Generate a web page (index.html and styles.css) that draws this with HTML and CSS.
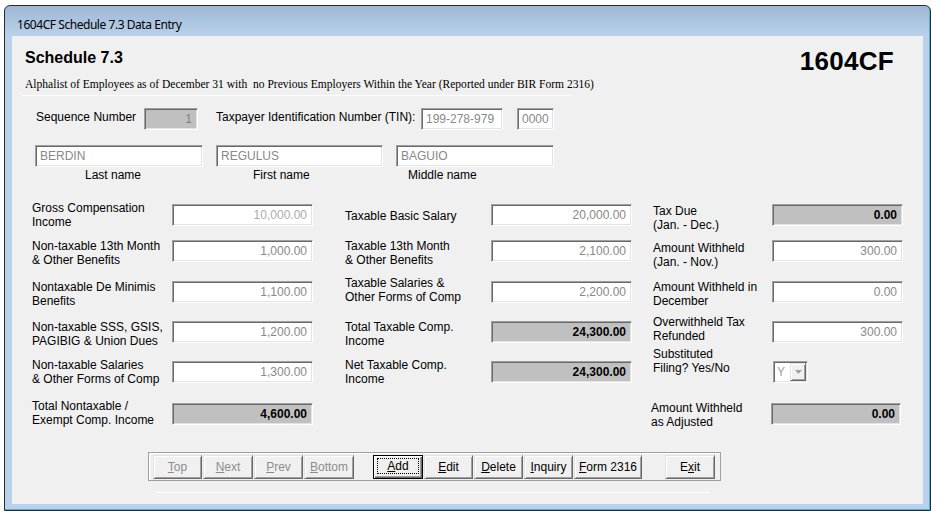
FILE: index.html
```html
<!DOCTYPE html>
<html>
<head>
<meta charset="utf-8">
<title>1604CF Schedule 7.3 Data Entry</title>
<link rel="stylesheet" href="styles.css">
</head>
<body>
<div class="window">
  <div class="titlebar">1604CF Schedule 7.3 Data Entry</div>
  <div class="client">
    <header class="head">
      <div class="head-left">
        <h1 class="sched">Schedule 7.3</h1>
        <p class="sub">Alphalist of Employees as of December 31 with&nbsp; no Previous Employers Within the Year (Reported under BIR Form 2316)</p>
      </div>
      <div class="formno">1604CF</div>
    </header>
    <div class="rule"></div>

    <div class="idrow">
      <span class="seq-lbl">Sequence Number</span>
      <div class="fld gray-plain seq">1</div>
      <span class="tin-lbl">Taxpayer Identification Number (TIN):</span>
      <div class="fld txt tin">199-278-979</div>
      <div class="fld txt tin2">0000</div>
    </div>

    <div class="names">
      <div class="fld txt">BERDIN</div>
      <div class="fld txt">REGULUS</div>
      <div class="fld txt">BAGUIO</div>
    </div>
    <div class="names namelabels">
      <span class="nl1">Last name</span>
      <span class="nl2">First name</span>
      <span class="nl3">Middle name</span>
    </div>

    <div class="cols">
      <div class="col col1">
        <span class="lbl up3">Gross Compensation<br>Income</span>
        <div class="fld num light">10,000.00</div>
        <span class="lbl up1">Non-taxable 13th Month<br>&amp; Other Benefits</span>
        <div class="fld num">1,000.00</div>
        <span class="lbl up1">Nontaxable De Minimis<br>Benefits</span>
        <div class="fld num">1,100.00</div>
        <span class="lbl up1">Non-taxable SSS, GSIS,<br>PAGIBIG &amp; Union Dues</span>
        <div class="fld num">1,200.00</div>
        <span class="lbl up3">Non-taxable Salaries<br>&amp; Other Forms of Comp</span>
        <div class="fld num">1,300.00</div>
        <span class="lbl up4">Total Nontaxable /<br>Exempt Comp. Income</span>
        <div class="fld num total">4,600.00</div>
      </div>

      <div class="col col2">
        <span class="lbl dn5">Taxable Basic Salary</span>
        <div class="fld num">20,000.00</div>
        <span class="lbl up1">Taxable 13th Month<br>&amp; Other Benefits</span>
        <div class="fld num">2,100.00</div>
        <span class="lbl up5">Taxable Salaries &amp;<br>Other Forms of Comp</span>
        <div class="fld num">2,200.00</div>
        <span class="lbl up1">Total Taxable Comp.<br>Income</span>
        <div class="fld num total">24,300.00</div>
        <span class="lbl up3">Net Taxable Comp.<br>Income</span>
        <div class="fld num total">24,300.00</div>
      </div>

      <div class="col col3">
        <span class="lbl z">Tax Due<br>(Jan. - Dec.)</span>
        <div class="fld num total">0.00</div>
        <span class="lbl dn1">Amount Withheld<br>(Jan. - Nov.)</span>
        <div class="fld num">300.00</div>
        <span class="lbl up1">Amount Withheld in<br>December</span>
        <div class="fld num">0.00</div>
        <span class="lbl up6">Overwithheld Tax<br>Refunded</span>
        <div class="fld num">300.00</div>
        <span class="lbl up14">Substituted<br>Filing? Yes/No</span>
        <div class="fld combo"><span class="combo-val">Y</span><span class="combo-btn"><svg width="7" height="4" viewBox="0 0 7 4"><path d="M0 0h7L3.5 4z" fill="#a0a0a0"/></svg></span></div>
        <span class="lbl up2 shift">Amount Withheld<br>as Adjusted</span>
        <div class="fld num total shift">0.00</div>
      </div>
    </div>

    <div class="btnbar">
      <div class="btn dis w49"><u>T</u>op</div>
      <div class="btn dis w50"><u>N</u>ext</div>
      <div class="btn dis w49"><u>P</u>rev</div>
      <div class="btn dis w50"><u>B</u>ottom</div>
      <div class="btn def w50 gap-l"><span class="focus"><u>A</u>dd</span></div>
      <div class="btn w49"><u>E</u>dit</div>
      <div class="btn w49"><u>D</u>elete</div>
      <div class="btn w49"><u>I</u>nquiry</div>
      <div class="btn w68"><u>F</u>orm 2316</div>
      <div class="btn w50 gap-r">E<u>x</u>it</div>
    </div>
    <div class="rule2"></div>
  </div>
</div>
</body>
</html>
```
FILE: styles.css
```css
html, body {
  margin: 0;
  padding: 0;
  background: #ffffff;
}

body {
  font-family: "Liberation Sans", Arial, sans-serif;
  font-size: 12px;
  color: #000;
}

.window {
  margin: 5px 0 0 4px;
  width: 927px;
  height: 506px;
  box-sizing: border-box;
  border: 1px solid #2b2b2b;
  border-radius: 6px 6px 0 0;
  background: linear-gradient(to bottom, #9db7d5 0, #b9d1ea 30px, #b9d1ea 100%);
  padding: 0 7px 6px 7px;
  display: flex;
  flex-direction: column;
  box-shadow: inset -1px -1px 0 #4fb0d3;
}

.titlebar {
  height: 21px;
  padding: 9px 0 0 5px;
  font-family: "Noto Sans", "Liberation Sans", sans-serif;
  font-size: 12px;
  letter-spacing: -0.45px;
  line-height: 20px;
  color: #000;
  white-space: nowrap;
}

.client {
  width: 911px;
  height: 468px;
  background: #f0f0f0;
  display: flex;
  flex-direction: column;
  flex: none;
}

/* header */
.head {
  display: flex;
  justify-content: space-between;
  align-items: flex-start;
  padding: 10px 29px 0 13px;
}

.sched {
  margin: 3px 0 0;
  font-size: 16px;
  line-height: 18px;
  font-weight: bold;
}

.sub {
  margin: 11px 0 0;
  font-family: "Liberation Serif", "Times New Roman", serif;
  font-size: 11.55px;
  line-height: 13px;
  white-space: nowrap;
}

.formno {
  font-size: 26px;
  line-height: 30px;
  font-weight: bold;
  letter-spacing: 0.3px;
}

.rule {
  margin: 4px 0 0 10px;
  width: 549px;
  border-top: 1px solid #ffffff;
}

/* fields */
.fld {
  box-sizing: border-box;
  height: 22px;
  border: 1px solid;
  border-color: #a0a0a0 #ffffff #ffffff #a0a0a0;
  box-shadow: inset 1px 1px 0 #696969, inset -1px -1px 0 #e3e3e3;
  background: #ffffff;
  line-height: 20px;
  color: #888888;
  white-space: nowrap;
  overflow: hidden;
}

.fld.txt {
  padding-left: 4px;
  text-align: left;
}

.fld.num {
  text-align: right;
  padding-right: 5px;
}

.fld.light {
  color: #ababab;
}

.fld.total {
  background: #c0c0c0;
  color: #000;
  font-weight: bold;
}

.fld.gray-plain {
  background: #c0c0c0;
  color: #808080;
  text-align: right;
  padding-right: 5px;
}

/* id row */
.idrow {
  display: flex;
  align-items: flex-start;
  margin: 12px 0 0 24px;
  line-height: 14px;
}

.seq-lbl {
  width: 108px;
  margin-top: 2px;
}

.seq {
  width: 54px;
}

.tin-lbl {
  margin: 2px 0 0 18px;
  width: 205px;
}

.tin {
  width: 82px;
}

.tin2 {
  margin-left: 14px;
  width: 37px;
  padding-left: 3px;
}

/* names */
.names {
  display: grid;
  grid-template-columns: 168px 167px 158px;
  column-gap: 13px;
  margin: 15px 0 0 23px;
}

.namelabels {
  margin-top: 1px;
  line-height: 14px;
}

.nl1 { padding-left: 50px; }
.nl2 { padding-left: 37px; }
.nl3 { padding-left: 12px; }

/* columns */
.cols {
  display: flex;
  margin: 22px 0 0 20px;
}

.col {
  display: grid;
  grid-template-rows: 36px 41px 40px 40px 42px 22px;
  align-items: start;
}

.col1 {
  grid-template-columns: 140px 141px;
}

.col2 {
  margin-left: 32px;
  grid-template-columns: 146px 141px;
}

.col3 {
  margin-left: 21px;
  grid-template-columns: 119px 131px;
}

.lbl {
  line-height: 14px;
  white-space: nowrap;
}

.up1 { margin-top: -1px; }
.up2 { margin-top: -2px; }
.up3 { margin-top: -3px; }
.up4 { margin-top: -4px; }
.up5 { margin-top: -5px; }
.up6 { margin-top: -6px; }
.up14 { margin-top: -14px; }
.z { margin-top: 0; }
.dn1 { margin-top: 1px; }
.dn5 { margin-top: 5px; }

.lbl.shift { margin-left: -2px; }
.fld.shift { margin-left: -1px; width: 130px; }

.combo {
  width: 35px;
  margin-left: 1px;
  display: flex;
  align-items: stretch;
  padding: 1px;
}

.combo-val {
  flex: 1;
  padding-left: 2px;
  line-height: 18px;
  color: #a0a0a0;
}

.combo-btn {
  width: 16px;
  box-sizing: border-box;
  background: #f0f0f0;
  border: 1px solid;
  border-color: #e3e3e3 #696969 #696969 #e3e3e3;
  box-shadow: inset 1px 1px 0 #ffffff, inset -1px -1px 0 #a0a0a0;
  display: flex;
  align-items: center;
  justify-content: center;
}

/* buttons */
.btnbar {
  display: flex;
  gap: 1px;
  box-sizing: border-box;
  width: 573px;
  height: 29px;
  margin: 27px 0 0 136px;
  padding: 2px 0 0 4px;
  border: 1px solid #a0a0a0;
  box-shadow: inset 1px 1px 0 #ffffff;
}

.btn {
  box-sizing: border-box;
  height: 24px;
  background: #f0f0f0;
  border: 1px solid;
  border-color: #e3e3e3 #696969 #696969 #e3e3e3;
  box-shadow: inset 1px 1px 0 #ffffff, inset -1px -1px 0 #a0a0a0;
  line-height: 22px;
  text-align: center;
  color: #000;
  white-space: nowrap;
}

.btn.dis {
  color: #8d8d8d;
}

.btn.def {
  border-color: #000;
  box-shadow: inset 1px 1px 0 #ffffff, inset -1px -1px 0 #696969, inset -2px -2px 0 #a0a0a0;
}

.btn .focus {
  display: block;
  margin: 2px 3px 0;
  border: 1px dotted #000;
  line-height: 14px;
}

.w49 { width: 49px; }
.w50 { width: 50px; }
.w68 { width: 68px; }
.gap-l { margin-left: 18px; }
.gap-r { margin-left: 22px; }

.rule2 {
  margin: 11px 0 0 144px;
  width: 553px;
  border-top: 1px solid #ffffff;
}
```
